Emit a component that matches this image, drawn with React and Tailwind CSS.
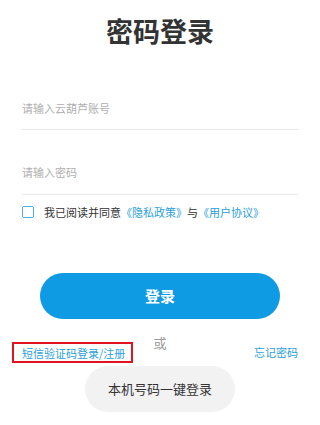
export default function App() {
  const font = { fontFamily: '"Noto Sans CJK SC", "Noto Sans", sans-serif' };
  return (
    <div className="w-[320px] h-[425px] bg-white flex flex-col overflow-hidden" style={font}>
      <div className="pt-[13px] text-center text-[27px] leading-[36px] font-bold text-[#333333]">密码登录</div>
      <div className="mx-[22px] pt-[51px] pb-[13px] border-b border-[#e8e8e8] text-[11px] leading-[16px] text-[#b0b0b0]">请输入云葫芦账号</div>
      <div className="mx-[22px] pt-[34px] pb-[14px] border-b border-[#e8e8e8] text-[11px] leading-[16px] text-[#b0b0b0]">请输入密码</div>
      <div className="mx-[22px] mt-[9px] flex items-center h-[16px] text-[11px] leading-[16px]">
        <div className="w-[12px] h-[12px] border-[1.5px] border-[#4fb0e0] rounded-[2px]"></div>
        <span className="ml-[10px] text-[#333333]">我已阅读并同意</span>
        <span className="text-[#2aa0da]">《隐私政策》</span>
        <span className="text-[#333333]">与</span>
        <span className="text-[#2aa0da]">《用户协议》</span>
      </div>
      <div className="mx-[40px] mt-[53px] h-[46px] rounded-full bg-[#0e9be3] flex items-center justify-center text-white text-[15px] font-bold">登录</div>
      <div className="mt-[16px] grid grid-cols-[1fr_auto_1fr] items-start">
        <div className="justify-self-start ml-[12px] mt-[7px] h-[21px] border-2 border-[#e0141e] pl-[8px] pr-[6px] flex items-center text-[11px] leading-[16px] text-[#2aa0da]">短信验证码登录/注册</div>
        <div className="text-[13px] leading-[16px] text-[#9a9a9a]">或</div>
        <div className="justify-self-end mr-[22px] mt-[9px] text-[11px] leading-[16px] text-[#2aa0da]">忘记密码</div>
      </div>
      <div className="self-center mt-[3px] w-[150px] h-[46px] rounded-full bg-[#f2f2f3] flex items-center justify-center text-[13px] text-[#333333]">本机号码一键登录</div>
    </div>
  );
}
